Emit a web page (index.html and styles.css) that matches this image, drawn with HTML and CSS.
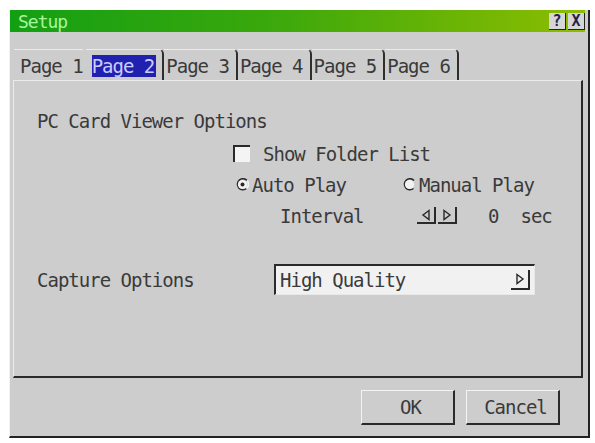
FILE: index.html
```html
<!DOCTYPE html>
<html lang="en">
<head>
<meta charset="UTF-8">
<title>Setup</title>
<link rel="stylesheet" href="styles.css">
</head>
<body>
<div class="window">
<div class="titlebar">
<span class="title">Setup</span>
<div class="title-buttons">
<span class="tbtn">?</span>
<span class="tbtn">X</span>
</div>
</div>

<div class="tabs">
<div class="tab first">Page 1</div>
<div class="tab second"><span class="focus">Page 2</span></div>
<div class="tab">Page 3</div>
<div class="tab">Page 4</div>
<div class="tab">Page 5</div>
<div class="tab">Page 6</div>
</div>

<div class="panel">
<div class="section-title">PC Card Viewer Options</div>

<div class="options">
<div class="row">
<span class="checkbox"></span>
<span class="label-gap">Show Folder List</span>
</div>
<div class="row">
<div class="radio-item auto">
<svg class="radio" width="13" height="13" viewBox="0 0 13 13">
<path d="M11 2.5 A5.5 5.5 0 1 0 10.5 10.5" fill="none" stroke="#2a2a2a" stroke-width="1.6"/>
<path d="M11 2.5 A5.5 5.5 0 0 1 10.5 10.5" fill="none" stroke="#f4f4f4" stroke-width="1.6"/>
<circle cx="6.5" cy="6.5" r="4.6" fill="#f2f2f2"/>
<circle cx="6.5" cy="6.5" r="2" fill="#2a2a2a"/>
</svg>
<span>Auto Play</span>
</div>
<div class="radio-item">
<svg class="radio" width="13" height="13" viewBox="0 0 13 13">
<path d="M11 2.5 A5.5 5.5 0 1 0 10.5 10.5" fill="none" stroke="#2a2a2a" stroke-width="1.6"/>
<circle cx="6.5" cy="6.5" r="4.6" fill="#f2f2f2"/>
</svg>
<span>Manual Play</span>
</div>
</div>
<div class="row interval">
<span class="interval-label">Interval</span>
<div class="spin">
<span class="arrow-btn">
<svg width="12" height="12" viewBox="0 0 12 12"><path d="M9 1.5 L3 6 L9 10.5 Z" fill="none" stroke="#2a2a2a" stroke-width="1.4"/></svg>
</span>
<span class="arrow-btn">
<svg width="12" height="12" viewBox="0 0 12 12"><path d="M3 1.5 L9 6 L3 10.5 Z" fill="none" stroke="#2a2a2a" stroke-width="1.4"/></svg>
</span>
</div>
<span class="value">0</span>
<span class="unit">sec</span>
</div>
</div>

<div class="capture">
<span class="capture-label">Capture Options</span>
<div class="select">
<span>High Quality</span>
<span class="arrow-btn">
<svg width="12" height="12" viewBox="0 0 12 12"><path d="M3 1.5 L9 6 L3 10.5 Z" fill="none" stroke="#2a2a2a" stroke-width="1.4"/></svg>
</span>
</div>
</div>
</div>

<div class="buttons">
<button class="btn">OK</button>
<button class="btn">Cancel</button>
</div>
</div>
</body>
</html>
```

FILE: styles.css
```css
body {
margin: 0;
background-color: #ffffff;
font-family: "DejaVu Sans Mono", "Liberation Mono", monospace;
font-size: 19px;
letter-spacing: -1px;
color: #3a3a3a;
}

.window {
box-sizing: border-box;
margin: 10px 0 0 9px;
width: 581px;
height: 428px;
background-color: #cdcdcd;
border-left: 1px solid #f2f2f2;
border-right: 2px solid #222;
border-bottom: 2px solid #222;
}

.titlebar {
display: flex;
justify-content: space-between;
align-items: center;
height: 22px;
margin-right: 3px;
background: linear-gradient(to right, #139f13, #3aa80c 45%, #8dbd00);
}

.title {
padding-left: 8px;
color: #a8f5a0;
font-size: 18px;
}

.title-buttons {
display: flex;
gap: 2px;
}

.tbtn {
box-sizing: border-box;
width: 17px;
height: 17px;
background-color: #d6d6d6;
border-right: 1px solid #222;
border-bottom: 1px solid #222;
color: #22224a;
font-size: 15px;
font-weight: bold;
letter-spacing: 0;
line-height: 16px;
text-align: center;
}

.tabs {
display: flex;
margin: 17px 0 0 4px;
height: 31px;
}

.tab {
box-sizing: border-box;
display: flex;
align-items: center;
padding: 2px 7px 0 2px;
border-top: 1px solid #ececec;
border-right: 2px solid #2e2e2e;
border-top-right-radius: 5px;
}

.tab.first {
padding-left: 6px;
padding-right: 1px;
border-right-color: #cdcdcd;
}

.tab.second {
padding-left: 6px;
padding-right: 6px;
}

.focus {
background-color: #2121b0;
color: #c8ccff;
padding-right: 2px;
}

.panel {
box-sizing: border-box;
margin-left: 3px;
width: 570px;
height: 298px;
padding: 30px 0 0 23px;
border-top: 1px solid #ececec;
border-left: 1px solid #ececec;
border-right: 2px solid #2a2a2a;
border-bottom: 2px solid #2a2a2a;
}

.section-title {
line-height: 20px;
}

.options {
margin: 7px 0 0 196px;
}

.row {
display: flex;
align-items: center;
height: 31px;
}

.checkbox {
box-sizing: border-box;
width: 17px;
height: 17px;
background-color: #f4f4f4;
border-top: 2px solid #2a2a2a;
border-left: 2px solid #2a2a2a;
}

.label-gap {
margin-left: 13px;
}

.radio-item {
display: flex;
align-items: center;
gap: 3px;
}

.radio-item.auto {
width: 167px;
margin-left: 3px;
}

.interval-label {
margin-left: 47px;
width: 137px;
}

.spin {
display: flex;
gap: 2px;
}

.arrow-btn {
box-sizing: border-box;
display: flex;
align-items: center;
justify-content: center;
width: 19px;
height: 17px;
border-right: 2px solid #2a2a2a;
border-bottom: 2px solid #2a2a2a;
}

.value {
margin-left: 31px;
}

.unit {
margin-left: 22px;
}

.capture {
display: flex;
align-items: center;
margin-top: 33px;
}

.capture-label {
width: 237px;
}

.select {
box-sizing: border-box;
display: flex;
justify-content: space-between;
align-items: center;
width: 261px;
height: 31px;
padding: 0 4px 0 4px;
background-color: #f1f1f1;
border-top: 2px solid #2a2a2a;
border-left: 2px solid #2a2a2a;
border-right: 1px solid #e8e8e8;
border-bottom: 1px solid #e8e8e8;
}

.select .arrow-btn {
height: 20px;
}

.buttons {
display: flex;
justify-content: flex-end;
gap: 11px;
padding: 12px 28px 0 0;
}

.btn {
box-sizing: border-box;
width: 94px;
height: 35px;
background-color: #cdcdcd;
border: none;
border-top: 1px solid #f4f4f4;
border-left: 1px solid #f4f4f4;
border-right: 2px solid #2a2a2a;
border-bottom: 2px solid #2a2a2a;
font-family: "DejaVu Sans Mono", "Liberation Mono", monospace;
font-size: 19px;
letter-spacing: -1px;
color: #3a3a3a;
padding: 0 0 0 6px;
}
```
